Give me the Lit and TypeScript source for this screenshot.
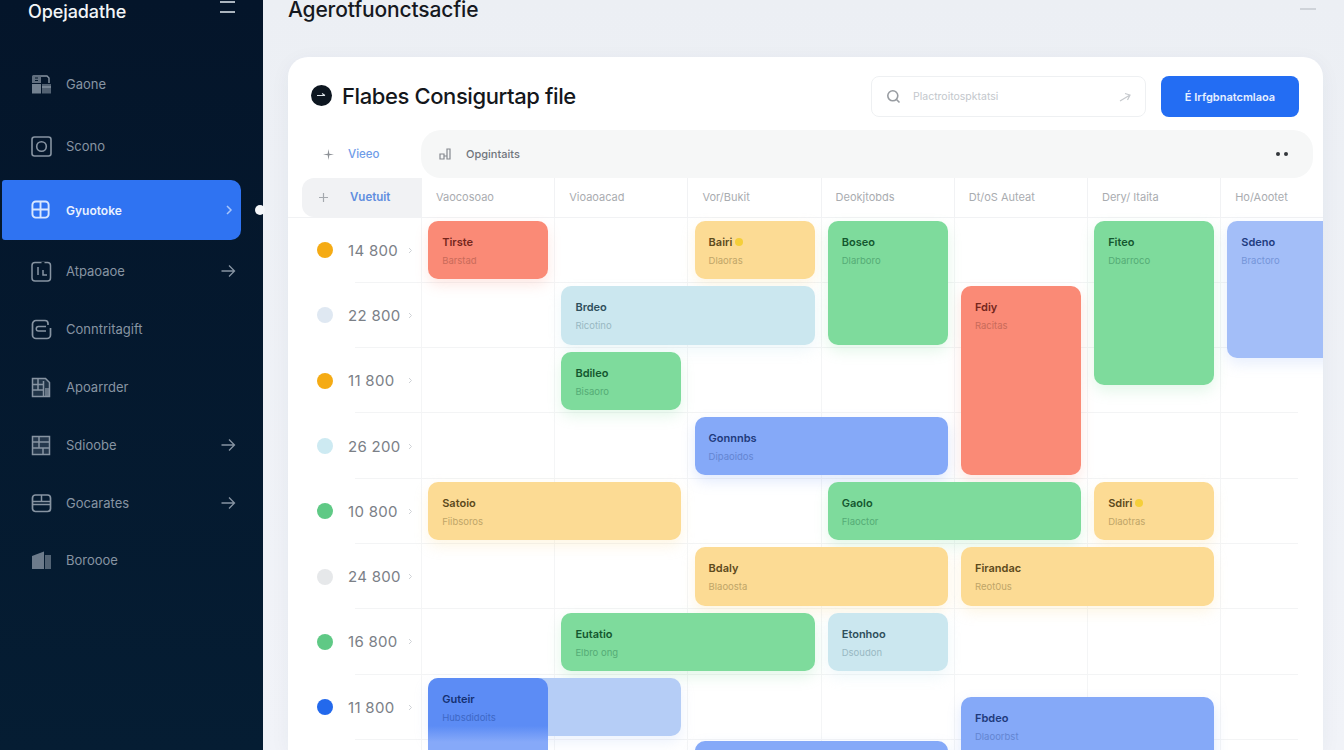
import { LitElement, html, css, svg } from 'lit';
import { customElement } from 'lit/decorators.js';

const icons: Record<string, any> = {
  docs: svg`<path d="M1 9V2.500A1.500 1.500 0 0 1 2.500 1H10v8z" fill="currentColor" opacity=".7"/><path d="M10 2h6l2 2v5" fill="none" stroke="currentColor" stroke-width="1.400"/><path d="M4 4h3M4 6.500h3" stroke="#04182b" stroke-width="1"/><rect x="1" y="10" width="9" height="9.500" fill="currentColor" opacity=".85"/><rect x="11" y="10" width="9" height="9.500" fill="currentColor" opacity=".6"/><path d="M11 13h9" stroke="currentColor" stroke-width="1.400"/>`,
  target: svg`<rect x="1" y="1" width="19" height="19" rx="2.500" fill="none" stroke="currentColor" stroke-width="1.600"/><circle cx="10.500" cy="10.500" r="4.800" fill="none" stroke="currentColor" stroke-width="1.600"/>`,
  grid: svg`<rect x="1.500" y="1.500" width="17" height="17" rx="3.500" fill="none" stroke="currentColor" stroke-width="2"/><path d="M10 1.500v17M1.500 10h17" stroke="currentColor" stroke-width="2"/>`,
  chart: svg`<rect x="1" y="1.500" width="18.500" height="18.500" rx="3" fill="none" stroke="currentColor" stroke-width="1.500"/><path d="M7 6v8M12 9v5h4" fill="none" stroke="currentColor" stroke-width="1.500"/><path d="M12 1v3" stroke="#04182b" stroke-width="3"/>`,
  loop: svg`<path d="M5 1.500h9a3 3 0 0 1 3 3V6M19.500 9v7a3.500 3.500 0 0 1-3.500 3.500H5A3.500 3.500 0 0 1 1.500 16V5A3.500 3.500 0 0 1 5 1.500" fill="none" stroke="currentColor" stroke-width="1.700"/><path d="M15 7.500H7.500a1.500 1.500 0 0 0 0 4.500H15" fill="none" stroke="currentColor" stroke-width="1.500"/>`,
  sheet: svg`<path d="M1.500 1.500h13l4 4v14h-17z" fill="currentColor" opacity=".22"/><path d="M1.500 1.500h13l4 4v14h-17zM1.500 7.500h11M1.500 13h11M12.500 4v15M7 1.500v12" fill="none" stroke="currentColor" stroke-width="1.500"/><rect x="14" y="11" width="4" height="8" fill="currentColor" opacity=".7"/>`,
  table: svg`<rect x="1.500" y="1.500" width="17" height="18" fill="currentColor" opacity=".25"/><path d="M1.500 1.500h17v18h-17zM1.500 7h17M1.500 13h17M8 1.500V13M12 13v6.500" fill="none" stroke="currentColor" stroke-width="1.500"/>`,
  box: svg`<rect x="1.500" y="2" width="18" height="16.500" rx="3" fill="none" stroke="currentColor" stroke-width="1.700"/><path d="M1.500 8.500h18M1.500 11.500h18" stroke="currentColor" stroke-width="1.500"/><path d="M10.500 2v6" stroke="currentColor" stroke-width="1.500"/>`,
  folder: svg`<path d="M1 6l12-4.500V19H1z" fill="currentColor" opacity=".8"/><rect x="14" y="5" width="6" height="14" fill="currentColor" opacity=".6"/>`,
};

const nav = [
  { label: 'Gaone', icon: 'docs' },
  { label: 'Scono', icon: 'target' },
  { label: 'Gyuotoke', icon: 'grid', active: true },
  { label: 'Atpaoaoe', icon: 'chart', arrow: true },
  { label: 'Conntritagift', icon: 'loop' },
  { label: 'Apoarrder', icon: 'sheet' },
  { label: 'Sdioobe', icon: 'table', arrow: true },
  { label: 'Gocarates', icon: 'box', arrow: true },
  { label: 'Boroooe', icon: 'folder' },
];

const columns = ['Vaocosoao', 'Vioaoacad', 'Vor/Bukit', 'Deokjtobds', 'Dt/oS Auteat', 'Dery/ Itaita', 'Ho/Aootet'];

const times = [
  { t: '14 800', c: '#f5ab14' },
  { t: '22 800', c: '#dfe8f2' },
  { t: '11 800', c: '#f5ab14' },
  { t: '26 200', c: '#cdeaf2' },
  { t: '10 800', c: '#5fc985' },
  { t: '24 800', c: '#e6e8ea' },
  { t: '16 800', c: '#5fc985' },
  { t: '11 800', c: '#2369ec' },
  { t: '', c: '' },
];

// col is 0-based day column, span in columns, rows in rows. h/top only for the ones off the row grid
const events: any[] = [
  { k: 'red', name: 'Tirste', sub: 'Barstad', col: 0, row: 0 },
  { k: 'yellow', name: 'Bairi', sub: 'Dlaoras', col: 2, row: 0, star: true },
  { k: 'green', name: 'Boseo', sub: 'Dlarboro', col: 3, row: 0, rows: 2 },
  { k: 'green', name: 'Fiteo', sub: 'Dbarroco', col: 5, row: 0, rows: 3, h: 164 },
  { k: 'peri', name: 'Sdeno', sub: 'Bractoro', col: 6, row: 0, rows: 3, h: 137 },
  { k: 'sky', name: 'Brdeo', sub: 'Ricotino', col: 1, row: 1, span: 2 },
  { k: 'red', name: 'Fdiy', sub: 'Racitas', col: 4, row: 1, rows: 3 },
  { k: 'green', name: 'Bdileo', sub: 'Bisaoro', col: 1, row: 2 },
  { k: 'blue', name: 'Gonnnbs', sub: 'Dipaoidos', col: 2, row: 3, span: 2 },
  { k: 'yellow', name: 'Satoio', sub: 'Fiibsoros', col: 0, row: 4, span: 2 },
  { k: 'green', name: 'Gaolo', sub: 'Flaoctor', col: 3, row: 4, span: 2 },
  { k: 'yellow', name: 'Sdiri', sub: 'Dlaotras', col: 5, row: 4, star: true },
  { k: 'yellow', name: 'Bdaly', sub: 'Blaoosta', col: 2, row: 5, span: 2 },
  { k: 'yellow', name: 'Firandac', sub: 'Reot0us', col: 4, row: 5, span: 2 },
  { k: 'green', name: 'Eutatio', sub: 'Elbro ong', col: 1, row: 6, span: 2 },
  { k: 'sky', name: 'Etonhoo', sub: 'Dsoudon', col: 3, row: 6 },
  { k: 'pale', name: '', sub: '', col: 0, row: 7, span: 2 },
  { k: 'deep', name: 'Guteir', sub: 'Hubsdidoits', col: 0, row: 7, rows: 2 },
  { k: 'blue', name: 'Fbdeo', sub: 'Dlaoorbst', col: 4, row: 7, span: 2, rows: 2, top: 22, h: 90 },
  { k: 'blue', name: '', sub: '', col: 2, row: 8, span: 2, top: 1 },
];

@customElement('app-root')
export class AppRoot extends LitElement {
  static styles = css`
    :host {
      display: flex;
      width: 1344px;
      height: 750px;
      overflow: hidden;
      font-family: Inter, 'Liberation Sans', sans-serif;
      background: linear-gradient(180deg, #eceff4 0%, #f1f3f8 100%);
    }

    /* sidebar */
    .side {
      position: relative;
      flex: 0 0 263px;
      background: linear-gradient(180deg, #04152a 0%, #051d33 100%);
    }
    .brand {
      display: flex;
      align-items: center;
      justify-content: space-between;
      height: 22px;
      padding: 0 28px;
      color: #f2f5f8;
      font-size: 18px;
      font-weight: 500;
      letter-spacing: -0.1px;
    }
    .burger {
      width: 15px;
      height: 8px;
      margin-top: -8px;
      border-top: 2px solid #aab4be;
      border-bottom: 2px solid #aab4be;
    }
    .nav {
      display: grid;
      grid-template-rows: 58px 66px 62px 60px 56px 60px 56px 60px 54px;
      margin-top: 33px;
    }
    .item {
      display: flex;
      align-items: center;
      padding-left: 31px;
      padding-right: 27px;
      color: #8794a2;
      font-size: 13px;
    }
    .item svg.ic {
      width: 21px;
      height: 21px;
      flex: none;
      margin-right: 14px;
    }
    .item .lbl {
      flex: 1;
    }
    .item .arrow {
      width: 15px;
      height: 14px;
    }
    .item.active {
      margin: 1px 22px 1px 2px;
      padding-left: 29px;
      padding-right: 5px;
      border-radius: 3px 10px 10px 3px;
      background: #2f73f2;
      color: #e9f1ff;
      font-weight: 600;
      font-size: 12px;
    }
    .item.active svg.ic {
      color: #d9e7ff;
      margin-right: 15px;
      width: 20px;
      height: 20px;
    }
    .chev {
      width: 8px;
      height: 10px;
      margin-right: 3px;
      color: #a8c6fb;
    }
    .notch {
      position: absolute;
      left: 255px;
      top: 205px;
      width: 10px;
      height: 10px;
      border-radius: 50%;
      background: #f5f7fa;
    }

    /* main */
    .main {
      flex: 1;
      min-width: 0;
      display: flex;
      flex-direction: column;
      padding: 0 21px 0 25px;
    }
    .top {
      display: flex;
      flex: none;
      align-items: center;
      justify-content: space-between;
      height: 18px;
      margin-bottom: 39px;
      color: #16191f;
      font-size: 21px;
      font-weight: 500;
      letter-spacing: -0.15px;
    }
    .top i {
      width: 16px;
      height: 1.500px;
      margin-right: 7px;
      background: #cfd3d9;
    }
    .card {
      flex: 1;
      min-height: 0;
      overflow: hidden;
      border-radius: 20px 20px 0 0;
      background: #fff;
      box-shadow: 0 4px 20px rgba(30, 50, 90, 0.05);
    }
    .head {
      display: flex;
      align-items: center;
      height: 41px;
      margin-top: 19px;
      padding: 0 24px 0 23px;
    }
    .logo {
      width: 21px;
      height: 21px;
      flex: none;
      margin: -2px 10px 0 0;
    }
    .title {
      flex: 1;
      margin-top: -2px;
      color: #14171c;
      font-size: 22px;
      font-weight: 500;
      letter-spacing: -0.4px;
    }
    .search {
      display: flex;
      align-items: center;
      box-sizing: border-box;
      width: 275px;
      height: 41px;
      margin-right: 15px;
      padding: 0 14px;
      border: 1px solid #eef0f2;
      border-radius: 8px;
      color: #c3c7cc;
      font-size: 10.500px;
    }
    .search svg {
      flex: none;
    }
    .search span {
      flex: 1;
      margin-left: 12px;
    }
    .btn {
      display: flex;
      align-items: center;
      justify-content: center;
      width: 138px;
      height: 41px;
      border-radius: 8px;
      background: #236df3;
      color: #e6efff;
      font-size: 11px;
      font-weight: 600;
    }
    .tools {
      display: flex;
      height: 48px;
      margin-top: 13px;
    }
    .tools-left {
      display: flex;
      align-items: center;
      flex: 0 0 133px;
      box-sizing: border-box;
      padding-left: 35px;
      color: #6f9ce8;
      font-size: 11.500px;
      font-weight: 500;
    }
    .tools-left svg {
      margin-right: 14px;
    }
    .pill {
      display: flex;
      align-items: center;
      flex: 1;
      margin-right: 10px;
      padding: 0 25px 0 18px;
      border-radius: 20px;
      background: #f6f7f7;
      color: #70757c;
      font-size: 11px;
      font-weight: 500;
    }
    .pill svg {
      margin-right: 14px;
    }
    .pill span {
      flex: 1;
    }
    .pill b {
      width: 4px;
      height: 4px;
      margin-left: 4px;
      border-radius: 50%;
      background: #33373c;
    }
    .cols,
    .grid {
      display: grid;
      grid-template-columns: 133px repeat(7, 133.200px);
    }
    .cols {
      height: 39.500px;
      border-bottom: 1px solid #f1f2f4;
      box-sizing: border-box;
    }
    .pick {
      display: flex;
      align-items: center;
      margin-left: 14px;
      padding-left: 17px;
      border-radius: 12px 0 0 12px;
      background: #f1f2f4;
      color: #5f8edf;
      font-size: 11.500px;
      font-weight: 600;
    }
    .pick svg {
      margin-right: 22px;
    }
    .col {
      display: flex;
      align-items: center;
      padding-left: 14px;
      border-left: 1px solid #f1f2f4;
      color: #a9acb0;
      font-size: 11px;
    }
    .grid {
      grid-template-rows: repeat(9, 65.300px);
    }
    .vline {
      grid-row: 1 / -1;
      border-left: 1px solid #f4f5f6;
    }
    .hline {
      grid-column: 1 / -1;
      align-self: end;
      margin: 0 55px 0 67px;
      border-bottom: 1px solid #f3f4f5;
    }
    .time {
      display: flex;
      align-items: center;
      grid-column: 1;
      padding-left: 29px;
      color: #7b8087;
      font-size: 15px;
      letter-spacing: 0.3px;
    }
    .dot {
      width: 16px;
      height: 16px;
      flex: none;
      margin-right: 15px;
      border-radius: 50%;
    }
    .time .tx {
      width: 60px;
    }
    .time svg {
      flex: none;
    }

    /* events */
    .ev {
      box-sizing: border-box;
      margin: 3.500px 6px 3.500px 7.200px;
      padding: 14px 14px 0;
      border-radius: 10px;
      font-size: 11px;
      font-weight: 600;
      line-height: 14px;
    }
    .ev small {
      display: block;
      margin-top: 5px;
      font-size: 9.500px;
      font-weight: 400;
      line-height: 14px;
    }
    .ev .star {
      display: inline-block;
      width: 8px;
      height: 8px;
      margin-left: 3px;
      border-radius: 50%;
      background: #f5cf3a;
    }
    .red {
      background: #fa8a76;
      color: #74261c;
      box-shadow: 0 6px 14px rgba(250, 138, 118, 0.2);
    }
    .red small {
      color: #c96b5a;
    }
    .yellow {
      background: #fcdb94;
      color: #5c4a1c;
      box-shadow: 0 6px 14px rgba(252, 219, 148, 0.25);
    }
    .yellow small {
      color: #c0a568;
    }
    .green {
      background: #7edb9c;
      color: #14572f;
      box-shadow: 0 6px 14px rgba(126, 219, 156, 0.22);
    }
    .green small {
      color: #55ab76;
    }
    .sky {
      background: #cbe7ef;
      color: #2f4f5c;
      box-shadow: 0 6px 14px rgba(203, 231, 239, 0.3);
    }
    .sky small {
      color: #98b8c2;
    }
    .peri {
      background: #a3bef8;
      color: #1f3c80;
      box-shadow: 0 6px 14px rgba(163, 190, 248, 0.25);
    }
    .peri small {
      color: #7595d8;
    }
    .blue {
      background: #85a9f8;
      color: #1e3a7c;
      box-shadow: 0 6px 14px rgba(133, 169, 248, 0.25);
    }
    .blue small {
      color: #6385d2;
    }
    .pale {
      background: #b5cdf6;
      box-shadow: 0 6px 14px rgba(181, 205, 246, 0.25);
    }
    .deep {
      background: linear-gradient(180deg, #5c8cf5 0, #5c8cf5 48px, #86a9f9 64px);
      color: #143072;
    }
    .deep small {
      color: #3e68c6;
    }
  `;

  renderEvent(e: any) {
    const place = `grid-column:${e.col + 2} / span ${e.span || 1};grid-row:${e.row + 1} / span ${e.rows || 1};`;
    const extra =
      (e.h ? `height:${e.h}px;align-self:start;` : '') + (e.top ? `margin-top:${e.top}px;` : '');
    return html`<div class="ev ${e.k}" style="${place}${extra}">
      ${e.name}${e.star ? html`<span class="star"></span>` : ''}
      ${e.sub ? html`<small>${e.sub}</small>` : ''}
    </div>`;
  }

  render() {
    return html`
      <aside class="side">
        <div class="brand">Opejadathe<span class="burger"></span></div>
        <div class="nav">
          ${nav.map(
            (n) => html`<div class="item ${n.active ? 'active' : ''}">
              <svg class="ic" viewBox="0 0 21 21">${icons[n.icon]}</svg>
              <span class="lbl">${n.label}</span>
              ${n.arrow
                ? html`<svg class="arrow" viewBox="0 0 15 14" fill="none" stroke="currentColor" stroke-width="1.300"><path d="M0.500 7h13M8 1.500L13.500 7 8 12.500"/></svg>`
                : ''}
              ${n.active
                ? html`<svg class="chev" viewBox="0 0 8 10" fill="none" stroke="currentColor" stroke-width="1.500"><path d="M2 1l4 4-4 4"/></svg>`
                : ''}
            </div>`
          )}
        </div>
        <div class="notch"></div>
      </aside>
      <main class="main">
        <div class="top"><span>Agerotfuonctsacfie</span><i></i></div>
        <section class="card">
          <div class="head">
            <svg class="logo" viewBox="0 0 21 21">
              <circle cx="10.500" cy="10.500" r="10.500" fill="#0d1620" />
              <path d="M6 10.500h8M11 8.500l3 2" fill="none" stroke="#dfe5ea" stroke-width="1.200" />
            </svg>
            <div class="title">Flabes Consigurtap file</div>
            <div class="search">
              <svg width="15" height="15" viewBox="0 0 15 15" fill="none" stroke="#989ca1" stroke-width="1.600">
                <circle cx="6.800" cy="6.800" r="5" /><path d="M10.500 10.500L13.500 13.500" />
              </svg>
              <span>Plactroitospktatsi</span>
              <svg width="12" height="12" viewBox="0 0 12 12" fill="none" stroke="#c6c9cd" stroke-width="1.200">
                <path d="M1 10L11 4M6 2.500L11 4 8.500 9" />
              </svg>
            </div>
            <div class="btn">&Eacute; Irfgbnatcmlaoa</div>
          </div>
          <div class="tools">
            <div class="tools-left">
              <svg width="11" height="11" viewBox="0 0 11 11" fill="#8d9197">
                <path d="M5.500 0L6.300 4.700 11 5.500 6.300 6.300 5.500 11 4.700 6.300 0 5.500 4.700 4.700z" />
              </svg>
              Vieeo
            </div>
            <div class="pill">
              <svg width="13" height="12" viewBox="0 0 13 12" fill="none" stroke="#85898f" stroke-width="1.200">
                <path d="M1 6h4v5H1zM8 1h3v10H8zM5 8h3" />
              </svg>
              <span>Opgintaits</span>
              <b></b><b></b>
            </div>
          </div>
          <div class="cols">
            <div class="pick">
              <svg width="9" height="9" viewBox="0 0 9 9" stroke="#a5a9ae" stroke-width="1.200"><path d="M4.500 0v9M0 4.500h9" /></svg>
              Vuetuit
            </div>
            ${columns.map((c) => html`<div class="col">${c}</div>`)}
          </div>
          <div class="grid">
            ${columns.map((_, i) => html`<div class="vline" style="grid-column:${i + 2}"></div>`)}
            ${times.map(
              (t, i) => html`<div class="hline" style="grid-row:${i + 1}"></div>
                ${t.t
                  ? html`<div class="time" style="grid-row:${i + 1}">
                      <span class="dot" style="background:${t.c}"></span>
                      <span class="tx">${t.t}</span>
                      <svg width="5" height="7" viewBox="0 0 5 7" fill="none" stroke="#cfd2d6" stroke-width="1"><path d="M1 1l2.500 2.500L1 6" /></svg>
                    </div>`
                  : ''}`
            )}
            ${events.map((e) => this.renderEvent(e))}
          </div>
        </section>
      </main>
    `;
  }
}
